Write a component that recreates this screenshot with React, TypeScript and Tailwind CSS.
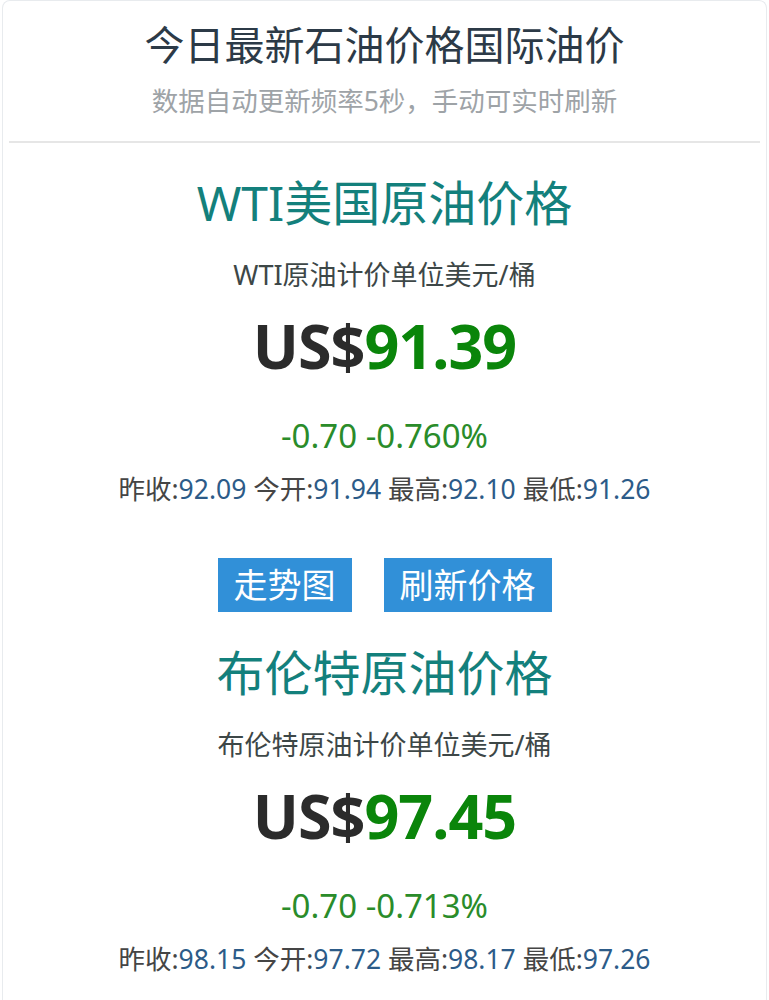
const FONT = "font-['Noto_Sans','Noto_Sans_CJK_SC',sans-serif]";

interface Quote {
  name: string;
  unit: string;
  price: string;
  change: string;
  percent: string;
  stats: { label: string; value: string }[];
}

const quotes: Quote[] = [
  {
    name: 'WTI美国原油价格',
    unit: 'WTI原油计价单位美元/桶',
    price: '91.39',
    change: '-0.70',
    percent: '-0.760%',
    stats: [
      { label: '昨收', value: '92.09' },
      { label: '今开', value: '91.94' },
      { label: '最高', value: '92.10' },
      { label: '最低', value: '91.26' },
    ],
  },
  {
    name: '布伦特原油价格',
    unit: '布伦特原油计价单位美元/桶',
    price: '97.45',
    change: '-0.70',
    percent: '-0.713%',
    stats: [
      { label: '昨收', value: '98.15' },
      { label: '今开', value: '97.72' },
      { label: '最高', value: '98.17' },
      { label: '最低', value: '97.26' },
    ],
  },
];

function QuoteBlock({ q, first }: { q: Quote; first?: boolean }) {
  return (
    <section className={`flex flex-col items-center text-center ${first ? 'mt-[30px]' : 'mt-[31px]'}`}>
      <h2 className="text-[48px] leading-[60px] text-[#13807c]">{q.name}</h2>
      <p className="mt-[22px] text-[27px] leading-[40px] text-[#3d4747]">{q.unit}</p>
      <div className="mt-[15px] text-[61px] leading-[72px] font-bold tracking-[-1px]">
        <span className="text-[#2b2b2b]">US$</span>
        <span className="text-[#0a850a]">{q.price}</span>
      </div>
      <p className="mt-[32px] text-[33px] leading-[44px] text-[#2a8c2a]">
        {q.change} {q.percent}
      </p>
      <p className="mt-[13px] text-[26.5px] leading-[36px] text-[#454545]">
        {q.stats.map((s, i) => (
          <span key={s.label}>
            {i > 0 && ' '}
            {s.label}:<span className="text-[#2c5b88]">{s.value}</span>
          </span>
        ))}
      </p>
    </section>
  );
}

export default function App() {
  return (
    <div className={`min-h-screen bg-white ${FONT}`}>
      <div className="mx-[2px] min-h-screen rounded-t-lg border border-b-0 border-[#e8ebee] pt-[16px]">
        <header className="text-center">
          <h1 className="text-[40px] leading-[56px] text-[#2c3a47]">今日最新石油价格国际油价</h1>
          <p className="mt-[10px] text-[26.5px] leading-[36px] text-[#9ea3a7]">
            数据自动更新频率5秒，手动可实时刷新
          </p>
        </header>
        <hr className="mx-[6px] mt-[22px] border-t-2 border-[#e6e6e6]" />

        <QuoteBlock q={quotes[0]} first />

        <div className="mt-[51px] flex justify-center gap-[32px]">
          <button className="h-[54px] bg-[#3190d8] px-[16px] text-[34px] leading-[54px] text-white">
            走势图
          </button>
          <button className="h-[54px] bg-[#3190d8] px-[16px] text-[34px] leading-[54px] text-white">
            刷新价格
          </button>
        </div>

        <QuoteBlock q={quotes[1]} />
      </div>
    </div>
  );
}
